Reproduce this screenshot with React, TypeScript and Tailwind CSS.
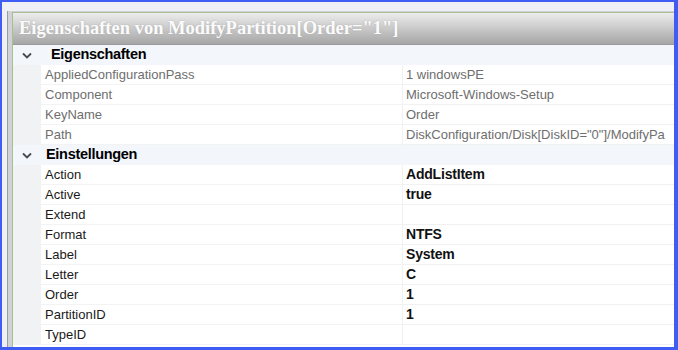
const ROWS: Array<
  | { kind: "cat"; label: string; indent: string }
  | { kind: "prop"; label: string; value: string; readonly?: boolean }
> = [
  { kind: "cat", label: "Eigenschaften", indent: "pl-[10px]" },
  { kind: "prop", label: "AppliedConfigurationPass", value: "1 windowsPE", readonly: true },
  { kind: "prop", label: "Component", value: "Microsoft-Windows-Setup", readonly: true },
  { kind: "prop", label: "KeyName", value: "Order", readonly: true },
  { kind: "prop", label: "Path", value: 'DiskConfiguration/Disk[DiskID="0"]/ModifyPa', readonly: true },
  { kind: "cat", label: "Einstellungen", indent: "pl-[5px]" },
  { kind: "prop", label: "Action", value: "AddListItem" },
  { kind: "prop", label: "Active", value: "true" },
  { kind: "prop", label: "Extend", value: "" },
  { kind: "prop", label: "Format", value: "NTFS" },
  { kind: "prop", label: "Label", value: "System" },
  { kind: "prop", label: "Letter", value: "C" },
  { kind: "prop", label: "Order", value: "1" },
  { kind: "prop", label: "PartitionID", value: "1" },
  { kind: "prop", label: "TypeID", value: "" },
];

function Chevron() {
  return (
    <svg width="10" height="7" viewBox="0 0 10 7" className="block">
      <path d="M1 1.5 L5 5.5 L9 1.5" fill="none" stroke="#4a4a4a" strokeWidth="1.8" />
    </svg>
  );
}

export default function App() {
  return (
    <div className="w-[678px] h-[350px] overflow-hidden border-l-2 border-t-2 border-r-4 border-b-[3px] border-[#3f5df2] bg-[#eef0f6] font-['Liberation_Sans',Arial,sans-serif] flex flex-col">
      <div className="flex-1 flex flex-col pl-[5px] pt-[9px] min-h-0">
        <div className="flex-1 flex min-h-0 border-l border-[#9c9c9c] bg-[#cfd2d6] pl-[4px] pt-[1px]">
          <div className="flex-1 flex flex-col min-w-0 border-l border-t border-[#a9bf92] bg-white">
            {/* title bar */}
            <div className="h-[32px] shrink-0 flex items-center pl-[6px] bg-gradient-to-b from-[#ededed] to-[#a6a6a6] border-b border-[#9a9a9a]">
              <span className="text-[18.5px] font-bold text-[#fbfbfb] font-['Liberation_Serif','Times_New_Roman',serif] whitespace-nowrap [text-shadow:0_0_2px_rgba(160,160,160,0.6)]">
                Eigenschaften von ModifyPartition[Order="1"]
              </span>
            </div>
            {/* grid */}
            <div className="flex flex-col">
              {ROWS.map((r, i) =>
                r.kind === "cat" ? (
                  <div key={i} className="h-[20px] flex items-center bg-[#f3f6fb]">
                    <div className="w-[28px] shrink-0 flex justify-center">
                      <Chevron />
                    </div>
                    <span className={`${r.indent} text-[14.5px] font-bold text-black tracking-[-0.3px] whitespace-nowrap`}>
                      {r.label}
                    </span>
                  </div>
                ) : (
                  <div key={i} className="h-[20px] flex">
                    <div className="w-[28px] shrink-0 bg-[#f1f2f4]" />
                    <div
                      className={`w-[361px] shrink-0 flex items-center pl-[4px] border-b border-[#f3f3f3] text-[13px] whitespace-nowrap ${
                        r.readonly ? "text-[#6e6e6e]" : "text-[#1a1a1a]"
                      }`}
                    >
                      {r.label}
                    </div>
                    <div
                      className={`flex-1 min-w-0 flex items-center pl-[3px] border-l border-b border-[#f1f1f1] whitespace-nowrap overflow-hidden ${
                        r.readonly ? "text-[13px] text-[#6e6e6e]" : "text-[14px] font-bold text-[#111111] tracking-[-0.2px]"
                      }`}
                    >
                      {r.value}
                    </div>
                  </div>
                )
              )}
            </div>
          </div>
        </div>
      </div>
    </div>
  );
}
